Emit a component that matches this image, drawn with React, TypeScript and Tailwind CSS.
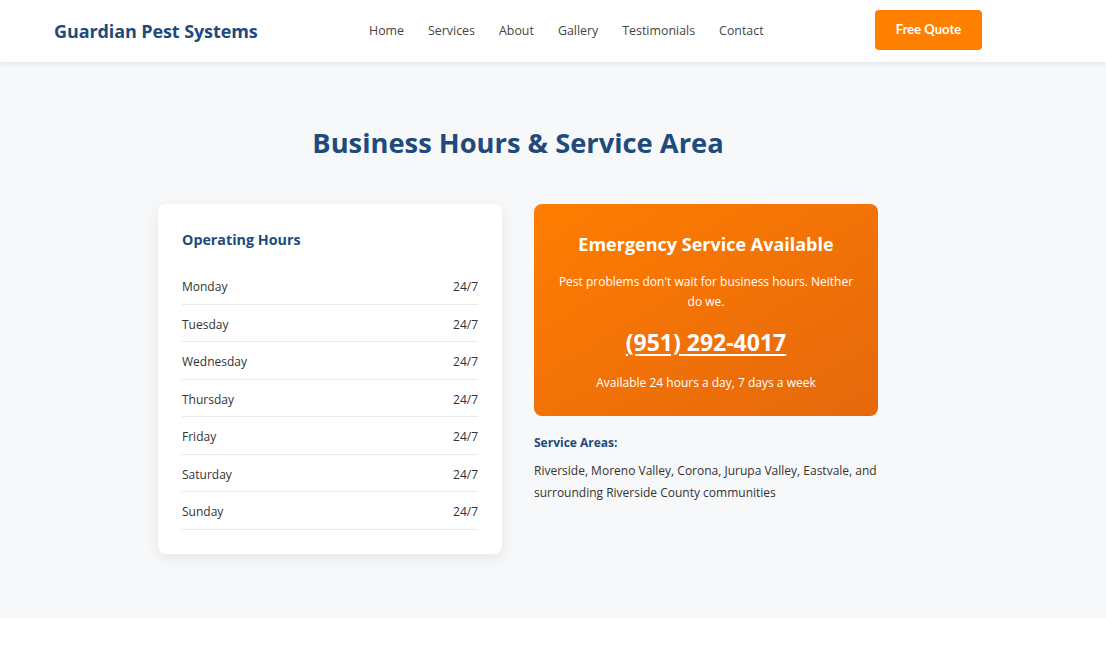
import React from "react";

const days = [
  "Monday",
  "Tuesday",
  "Wednesday",
  "Thursday",
  "Friday",
  "Saturday",
  "Sunday",
];

const navLinks = ["Home", "Services", "About", "Gallery", "Testimonials", "Contact"];

const App: React.FC = () => {
  return (
    <div className="min-h-screen bg-white font-['Open_Sans',sans-serif] text-[#333]">
      <header className="relative z-10 bg-white shadow-[0_2px_6px_rgba(0,0,0,0.08)]">
        <div className="w-[1036px] h-[62px] px-[54px] flex items-center justify-between">
          <a className="text-[18px] font-bold text-[#1e4a7c] tracking-[-0.1px]">
            Guardian Pest Systems
          </a>
          <nav className="flex items-center gap-6">
            {navLinks.map((link) => (
              <a key={link} className="text-[12.4px] text-[#444]">
                {link}
              </a>
            ))}
          </nav>
          <button className="w-[107px] h-10 mb-[2px] rounded-[4px] bg-[#ff7f00] text-white text-[13px] font-bold font-['Lato',sans-serif]">
            Free Quote
          </button>
        </div>
      </header>

      <section className="bg-[#f7f8fa] py-16">
        <div className="w-[1036px]">
          <h2 className="text-center text-[27.3px] leading-9 font-bold text-[#1e4a7c] mb-[43px] -mt-px">
            Business Hours &amp; Service Area
          </h2>

          <div className="w-[720px] mx-auto grid grid-cols-2 gap-8 items-start">
            <div className="bg-white rounded-lg p-6 shadow-[0_4px_14px_rgba(0,0,0,0.08)]">
              <h3 className="text-[14.3px] leading-6 font-bold text-[#1e4a7c] mb-[15px]">
                Operating Hours
              </h3>
              <ul>
                {days.map((day) => (
                  <li
                    key={day}
                    className="flex justify-between pt-[10px] pb-[6px] text-[12px] leading-[20.5px] border-b border-[#eaeaea]"
                  >
                    <span>{day}</span>
                    <span>24/7</span>
                  </li>
                ))}
              </ul>
            </div>

            <div>
              <div className="rounded-lg bg-gradient-to-br from-[#ff7d00] to-[#e5680c] text-white text-center px-[22px] pt-6 pb-6">
                <h3 className="text-[18px] leading-8 font-bold mb-3">
                  Emergency Service Available
                </h3>
                <p className="text-[12px] leading-[19.5px]">
                  Pest problems don't wait for business hours. Neither do we.
                </p>
                <a className="block mt-4 text-[23px] leading-[30px] font-bold underline underline-offset-[3px]">
                  (951) 292-4017
                </a>
                <p className="mt-[16px] text-[12px] leading-[19px]">
                  Available 24 hours a day, 7 days a week
                </p>
              </div>

              <h4 className="mt-[17px] text-[12px] leading-5 font-bold text-[#1e4a7c]">
                Service Areas:
              </h4>
              <p className="mt-[7px] text-[12px] leading-[22px] text-[#333]">
                Riverside, Moreno Valley, Corona, Jurupa Valley, Eastvale, and
                surrounding Riverside County communities
              </p>
            </div>
          </div>
        </div>
      </section>
    </div>
  );
};

export default App;
